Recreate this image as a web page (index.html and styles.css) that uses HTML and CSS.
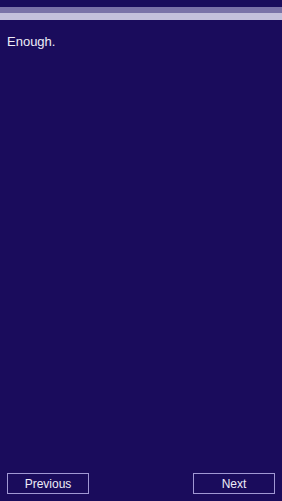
FILE: index.html
```html
<!DOCTYPE html>
<html lang="en">
    <head>
        <meta charset="UTF-8">
        <meta name="viewport" content="width=device-width, initial-scale=1.0">
        <title>Enough</title>
        <link rel="stylesheet" href="styles.css">
    </head>
    <body>
        <div class="clPagina">
            <!-- barras de progresso -->
            <div class="clBarras">
                <div class="clBarra1"></div>
                <div class="clBarra2"></div>
            </div>
            <p class="clTexto">Enough.</p>
            <div class="clRodape">
                <button type="button" class="clBotao">Previous</button>
                <button type="button" class="clBotao">Next</button>
            </div>
        </div>
    </body>
</html>
```
FILE: styles.css
```css
*{
    margin: 0px;
    padding: 0px;
    box-sizing: border-box;
}
body{
    background-color: rgb(26, 12, 92);
    font-family: "Liberation Sans", Arial, sans-serif;
    color: rgb(238, 236, 248);
}
.clPagina{
    display: flex;
    flex-direction: column;
    height: 501px;
}
.clBarras{
    padding-top: 7px;
}
.clBarra1{
    height: 6px;
    background-color: rgb(122, 114, 168);
}
.clBarra2{
    height: 7px;
    background-color: rgb(196, 192, 220);
}
.clTexto{
    font-size: 13px;
    padding-left: 7px;
    padding-top: 14px;
    flex: 1;
}
.clRodape{
    display: flex;
    justify-content: space-between;
    padding-left: 7px;
    padding-right: 7px;
    padding-bottom: 7px;
}
.clBotao{
    width: 82px;
    height: 21px;
    background-color: transparent;
    border: 1px solid rgb(160, 152, 212);
    color: rgb(238, 236, 248);
    font-family: "Liberation Sans", Arial, sans-serif;
    font-size: 12px;
}
```
